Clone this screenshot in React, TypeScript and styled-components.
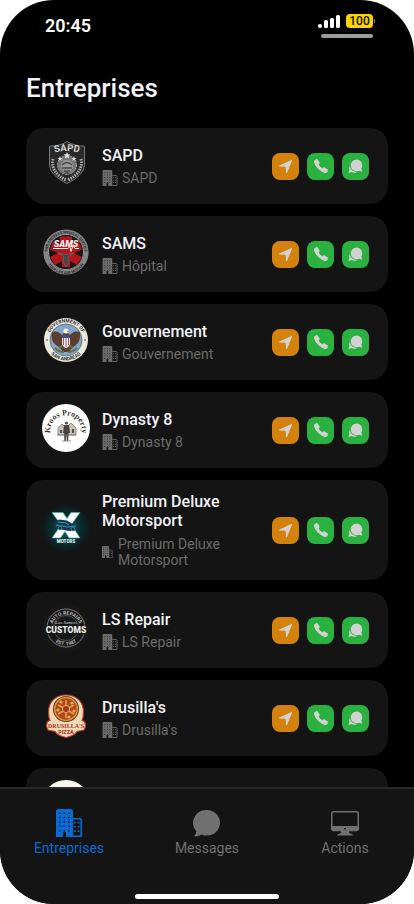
import React from "react";
import styled, { createGlobalStyle } from "styled-components";
import { IoCall } from "react-icons/io5";

const GlobalStyle = createGlobalStyle`
  * { box-sizing: border-box; }
  body { margin: 0; background: #fff; font-family: Roboto, "Liberation Sans", sans-serif; }
  button { font-family: inherit; border: 0; padding: 0; cursor: pointer; }
  h1, h2, p { margin: 0; font-weight: 500; }
`;

const Phone = styled.div`
  height: 100vh;
  display: flex;
  flex-direction: column;
  overflow: hidden;
  background: #000;
  border-radius: 54px;
`;

const StatusBar = styled.header`
  display: flex;
  justify-content: space-between;
  padding: 14px 38px 0 45px;
  height: 56px;
  flex-shrink: 0;
`;

const Clock = styled.time`
  color: #fff;
  font-size: 18px;
  line-height: 24px;
  font-weight: 600;
`;

const StatusSide = styled.div`
  display: flex;
  flex-direction: column;
  align-items: flex-end;
  gap: 6px;
`;

const StatusIcons = styled.div`
  display: flex;
  align-items: center;
  gap: 5px;
`;

const Battery = styled.span`
  position: relative;
  width: 27px;
  height: 14px;
  margin-right: 3px;
  border-radius: 4px;
  background: #fbd309;
  color: #111;
  font-size: 12px;
  line-height: 14px;
  font-weight: 500;
  text-align: center;

  &::after {
    content: "";
    position: absolute;
    right: -2px;
    top: 5px;
    width: 1px;
    height: 4px;
    background: #777;
  }
`;

const StatusLine = styled.div`
  width: 52px;
  height: 4px;
  margin-right: 3px;
  border-radius: 2px;
  background: #9b9b9b;
`;

const Main = styled.main`
  flex: 1;
  min-height: 0;
  display: flex;
  flex-direction: column;
  padding: 16px 26px 0;
`;

const PageTitle = styled.h1`
  color: #f2f2f7;
  font-size: 26px;
  line-height: 32px;
`;

const List = styled.ul`
  list-style: none;
  margin: 24px 0 0;
  padding: 0;
  flex: 1;
  min-height: 0;
  display: flex;
  flex-direction: column;
  gap: 12px;
  overflow-y: auto;
  scrollbar-width: none;
`;

const Card = styled.li`
  display: flex;
  flex-shrink: 0;
  align-items: center;
  gap: 12px;
  padding: 12px 19px 12px 16px;
  border-radius: 18px;
  background: #141414;
`;

const Avatar = styled.div`
  width: 48px;
  height: 52px;
  flex-shrink: 0;

  svg { display: block; }
`;

const Info = styled.div<{ $tight?: boolean }>`
  flex: 1;
  min-width: 0;
  display: flex;
  flex-direction: column;
  gap: ${(p) => (p.$tight ? 6 : 5)}px;
`;

const Name = styled.h2`
  max-width: 150px;
  color: #f2f2f7;
  font-size: 16px;
  line-height: 19px;
`;

const Category = styled.p<{ $tight?: boolean }>`
  display: flex;
  align-items: center;
  gap: ${(p) => (p.$tight ? 5 : 4)}px;
  max-width: 150px;
  color: #6b6b6b;
  font-size: 14px;
  line-height: 16px;
  font-weight: 400;

  svg { flex-shrink: 0; }
`;

const Actions = styled.div`
  display: flex;
  gap: 8px;
`;

const ActionButton = styled.button<{ $tone: "orange" | "green" }>`
  display: grid;
  place-items: center;
  width: 27px;
  height: 27px;
  border-radius: 8px;
  color: #d2d2d2;
  background: ${(p) => (p.$tone === "orange" ? "#d2820d" : "#2bb140")};
`;

const TabBar = styled.nav`
  display: grid;
  grid-template-columns: repeat(3, 1fr);
  flex-shrink: 0;
  padding-top: 20px;
  border-top: 2px solid #292929;
  background: #141414;
`;

const Tab = styled.button<{ $active?: boolean }>`
  display: flex;
  flex-direction: column;
  align-items: center;
  gap: 3px;
  background: none;
  color: ${(p) => (p.$active ? "#0a6ad4" : "#707070")};
  font-size: 14px;
  line-height: 16px;
`;

const HomeArea = styled.div`
  flex-shrink: 0;
  display: flex;
  justify-content: center;
  padding: 38px 0 5px;
  background: #141414;
`;

const HomeIndicator = styled.div`
  width: 144px;
  height: 5px;
  border-radius: 3px;
  background: #fff;
`;

const SignalIcon = () => (
  <svg width="23" height="14" viewBox="0 0 23 14" fill="#fff" aria-hidden="true">
    <rect x="0" y="10" width="4" height="4" rx="2" />
    <rect x="6" y="6" width="4" height="8" rx="1.5" />
    <rect x="12" y="4" width="4" height="10" rx="1.5" />
    <rect x="18" y="1" width="4" height="13" rx="1.5" />
  </svg>
);

const BuildingIcon = ({ width, height }: { width: number; height: number }) => (
  <svg width={width} height={height} viewBox="0 0 26 28" aria-hidden="true">
    <path
      fill="currentColor"
      fillRule="evenodd"
      d={
        "M2 0H15Q17 0 17 2V28H10V23H7V28H0V2Q0 0 2 0Z" +
        [4.3, 8.6, 13, 17.3, 21.7]
          .map((y) => [3.2, 7.6, 12].map((x) => `M${x} ${y - 0.7}h1.4v1.4h-1.4z`).join(""))
          .join("")
      }
    />
    <path d="M17 9.7H24Q25.2 9.7 25.2 11V27.2H17" fill="none" stroke="currentColor" strokeWidth="1.6" />
    <path
      fill="currentColor"
      d={[13.5, 17.7, 22].map((y) => [18, 21.6].map((x) => `M${x} ${y - 0.8}h1.7v1.7h-1.7z`).join("")).join("")}
    />
  </svg>
);

const ArrowIcon = () => (
  <svg width="15" height="15" viewBox="0 0 15 15" fill="currentColor" aria-hidden="true">
    <path d="M13.4 1Q14.5.6 14 1.7L9.2 13.4Q8.5 14.5 8 13.4L7.7 8.6Q7.6 7.9 6.9 7.8L1.6 7.6Q.4 7.2 1.5 6.4Z" />
  </svg>
);

const BubblesIcon = () => (
  <svg width="15" height="15" viewBox="0 0 15 15" fill="currentColor" aria-hidden="true">
    <path d="M8.3.4a5.9 5.9 0 0 1 5 9.1c.1.9.8 1.7.9 2.4.1.6-.4.8-1 .7l-2.2-.9A5.9 5.9 0 1 1 8.3.4Z" />
    <path d="M1.8 6.8A5 5 0 0 0 1.4 11c-.1 1-.7 1.5-.9 2.2 0 .6.4.8 1 .6l2-.7c2.1 1 4 .8 5.4-.2C5.2 12.7 2.2 10.6 1.8 6.8Z" />
  </svg>
);

const MessageIcon = () => (
  <svg width="28" height="28" viewBox="0 0 28 28" fill="currentColor" aria-hidden="true">
    <path d="M14 1a13 12.8 0 1 1-5.5 24.4c-1.7 1.2-4.1 1.9-6.6 1.8-.6-.1-.7-.6-.3-1 1.1-1 1.7-2.4 1.6-4.2A13 12.8 0 0 1 14 1Z" />
  </svg>
);

const MonitorIcon = () => (
  <svg width="28" height="28" viewBox="0 0 28 28" fill="currentColor" aria-hidden="true">
    <path
      fillRule="evenodd"
      d="M2.4 2H25.6Q28 2 28 4.4V20Q28 22.3 25.6 22.3H18V23.5Q18.2 24.6 20 24.8Q22 25 21.8 26.4H6.2Q6 25 8 24.8Q9.8 24.6 10 23.5V22.3H2.4Q0 22.3 0 20V4.4Q0 2 2.4 2ZM3 3.4Q1.5 3.4 1.5 4.8V17H26.5V4.8Q26.5 3.4 25 3.4ZM13 19V20.2H15V19Z"
    />
  </svg>
);

const Logo = ({ children }: { children: React.ReactNode }) => (
  <svg width="48" height="48" viewBox="0 0 48 48" aria-hidden="true" fontFamily="Roboto, sans-serif">
    {children}
  </svg>
);

const SapdLogo = () => (
  <Logo>
    <path
      d="M25 1.5C30 5 36 6 42.5 6.2V25C42 33 34 39 25 43.5C16 39 8 33 7.5 25V6.2C14 6 20 5 25 1.5Z"
      fill="#292929"
      stroke="#777"
      strokeWidth="1"
    />
    <path id="sapd-arc" d="M9 14Q25 8 41 14" fill="none" />
    <text fontSize="9.5" fontWeight="700" fill="#d6d6d6">
      <textPath href="#sapd-arc" startOffset="50%" textAnchor="middle">SAPD</textPath>
    </text>
    <path d="M11 19C9 28 14 35 24 40M39 19C41 28 36 35 26 40" fill="none" stroke="#aaa" strokeWidth="3" strokeDasharray="1.5 1" />
    <circle cx="25" cy="25" r="9.5" fill="#777" stroke="#aaa" strokeWidth="1" strokeDasharray="2 1" />
    <circle cx="25" cy="26" r="6" fill="#999" />
    <path d="M20 25q5-5 10 0M20 28h10M22 31h6M18 36l7-3 7 3" fill="none" stroke="#444" strokeWidth="1.3" />
    <path d="M25 12l1 2.3 2.4.2-1.8 1.6.6 2.4-2.2-1.3-2.2 1.3.6-2.4-1.8-1.6 2.4-.2ZM18 16l.7 2h2l-1.7 1 .6 2-1.6-1.2-1.6 1.2.6-2-1.7-1h2ZM32 16l.7 2h2l-1.7 1 .6 2-1.6-1.2-1.6 1.2.6-2-1.7-1h2Z" fill="#e2e2e2" />
  </Logo>
);

const SamsLogo = () => (
  <Logo>
    <circle cx="24" cy="24" r="20.3" fill="#171717" stroke="#858585" strokeWidth="4.6" />
    <circle cx="24" cy="24" r="17.6" fill="none" stroke="#b9b9b9" strokeWidth="0.8" />
    <path id="sams-top" d="M6 28.8A18.6 18.6 0 1 1 42 28.8" fill="none" />
    <path id="sams-bottom" d="M4.6 34A21.6 21.6 0 0 0 43.4 34" fill="none" />
    <g fontSize="3.7" fontWeight="700" fill="#252525">
      <text><textPath href="#sams-top" startOffset="50%" textAnchor="middle">SAN ANDREAS MEDICAL SERVICE</textPath></text>
      <text><textPath href="#sams-bottom" startOffset="50%" textAnchor="middle">YOUR LIFE OUR MISSION</textPath></text>
    </g>
    <path d="M18 8.5h12v7l7-2 3 8-8 3.5 8 4-5 8-7-4v6h-8v-6l-7 4-5-8 8-4-8-3.5 3-8 7 2Z" fill="#b0161c" />
    <path d="M16 25q8 3 16 0l-6 4 1 4-3 6-3-6 1-4Z" fill="#454545" stroke="#777" strokeWidth="0.6" />
    <text x="24" y="18.5" textAnchor="middle" fontSize="9" fontStyle="italic" fontWeight="900" fill="#f4f4f4">SAMS</text>
    <path d="M11 20.5h15l2-2 1 5 2-6 2 3h4" fill="none" stroke="#eee" strokeWidth="1" />
  </Logo>
);

const GovernmentLogo = () => (
  <Logo>
    <circle cx="24" cy="24" r="22" fill="#ece9dc" />
    <circle cx="24" cy="24" r="16" fill="#7fa6cf" stroke="#63675f" strokeWidth="0.8" />
    <path id="gov-top" d="M7 29A17.7 17.7 0 1 1 41 29" fill="none" />
    <path id="gov-bottom" d="M5.6 33A20.5 20.5 0 0 0 42.4 33" fill="none" />
    <g fontSize="4.9" fontWeight="700" fill="#353535">
      <text><textPath href="#gov-top" startOffset="50%" textAnchor="middle">GOVERNMENT OF</textPath></text>
      <text><textPath href="#gov-bottom" startOffset="50%" textAnchor="middle">SAN ANDREAS</textPath></text>
    </g>
    <circle cx="5" cy="24" r="0.8" fill="#333" />
    <circle cx="43" cy="24" r="0.8" fill="#333" />
    <path d="M10 16q6-2 10 3l2-2h4l2 2q4-5 10-3 1 9-4 13l-4 3-3 4h-6l-3-4-4-3q-6-4-4-13Z" fill="#5b3f2c" />
    <path d="M17 32l4-3M31 32l-4-3M13 32q4 4 9 4M35 32q-4 4-9 4" fill="none" stroke="#617247" strokeWidth="2" />
    <circle cx="24" cy="15" r="2.6" fill="#eee" />
    <path d="M25 14.5l3 1-3 1Z" fill="#d69b38" />
    <path d="M20 19h8v9q-1 3-4 4-3-1-4-4Z" fill="#eee" />
    <path d="M20 19h8v3h-8Z" fill="#3d5480" />
    <path d="M21.5 22v7M24 22v9M26.5 22v7" stroke="#b44f55" strokeWidth="1" />
  </Logo>
);

const KroosLogo = () => (
  <Logo>
    <circle cx="24" cy="24" r="24" fill="#fff" />
    <path id="kroos-arc" d="M8.2 29A15.9 15.9 0 1 1 39.8 29" fill="none" />
    <text fontSize="8" fontFamily="Liberation Serif, serif" fontWeight="700" fill="#3b3533">
      <textPath href="#kroos-arc" startOffset="50%" textAnchor="middle">Kroos Property</textPath>
    </text>
    <path d="M16 31v-7l4-4 4 4 5-5 5 5v7Z" fill="#c9c2b8" stroke="#7b736b" strokeWidth="0.8" />
    <path d="M18 26h2v3h-2ZM30 25h2v4h-2Z" fill="#544d49" />
    <circle cx="24.5" cy="19" r="1.6" fill="#5e5049" />
    <path d="M22 21h5l1 8h-1.4l-.4 8h-1.3l-.5-7-.6 7h-1.4l-.3-8H21Z" fill="#4a4440" />
    <path d="M15 31h19M20 37h9" stroke="#777" strokeWidth="0.7" />
  </Logo>
);

const MotorsLogo = () => (
  <Logo>
    <defs>
      <radialGradient id="teal-glow">
        <stop offset="0" stopColor="#176d6c" />
        <stop offset="0.55" stopColor="#0c3032" />
        <stop offset="1" stopColor="#0e1718" />
      </radialGradient>
    </defs>
    <circle cx="24" cy="24" r="24" fill="url(#teal-glow)" />
    <path d="M10 8.5h11l4 6 4-6h9L29.5 20.5 38 34H27l-4-6.5-4.5 6.5H10l9-13Z" fill="#fafefe" stroke="#39aaa5" strokeWidth="0.6" />
    <path d="M13 18l4-2.5 8 1 4 2.5 5 2 2 3-3 2.5-6 .5-10-2-4-2Z" fill="#183653" />
    <path d="M16 18l8 1 3 2M14 21l12 2 8-1" fill="none" stroke="#2c9caa" strokeWidth="1" />
    <circle cx="18" cy="24" r="1.8" fill="#102437" stroke="#2f7f95" />
    <circle cx="31" cy="25" r="1.8" fill="#102437" stroke="#2f7f95" />
    <text x="24" y="39" textAnchor="middle" fontSize="4.5" fontWeight="900" fill="#d9f5f3">MOTORS</text>
  </Logo>
);

const CustomsLogo = () => (
  <Logo>
    <circle cx="24" cy="24" r="24" fill="#171717" />
    <circle cx="24" cy="24" r="19" fill="none" stroke="#858585" strokeWidth="0.9" />
    <circle cx="24" cy="24" r="12.5" fill="none" stroke="#606060" strokeWidth="0.8" />
    <path id="customs-top" d="M9.6 25A14.4 14.4 0 1 1 38.4 25" fill="none" />
    <path id="customs-bottom" d="M7.6 30A17.5 17.5 0 0 0 40.4 30" fill="none" />
    <path d="M4 21.5h40v9H4Z" fill="#171717" />
    <g fontSize="5" fontWeight="700" fill="#b5b5b5">
      <text><textPath href="#customs-top" startOffset="50%" textAnchor="middle">AUTO REPAIRS</textPath></text>
      <text><textPath href="#customs-bottom" startOffset="50%" textAnchor="middle">EST. 1987</textPath></text>
    </g>
    <text x="24" y="20" textAnchor="middle" fontSize="5" fontStyle="italic" fontFamily="Liberation Serif, serif" fill="#ddd">Los Santos</text>
    <text x="24" y="29" textAnchor="middle" fontSize="8.5" fontWeight="900" fill="#ececec">CUSTOMS</text>
  </Logo>
);

const PizzaLogo = () => (
  <Logo>
    <path
      d="M24 3C35 3 41.5 10.5 41.5 20Q41.5 25 40 28.5L42.5 29.5Q44.5 34 42 38L35 39.5Q32 44 24 45.5Q16 44 13 39.5L6 38Q3.5 34 5.5 29.5L8 28.5Q6.5 25 6.5 20C6.5 10.5 13 3 24 3Z"
      fill="#ecdab6"
      stroke="#b93b2d"
      strokeWidth="1.2"
    />
    <circle cx="24" cy="17" r="13" fill="#5b2c1c" />
    <circle cx="24" cy="17" r="11.4" fill="#b5461d" stroke="#d89b39" strokeWidth="1.5" />
    <path d="M24 8v18M16 13l16 9M16 22l16-9" fill="none" stroke="#dda34d" strokeWidth="1.6" />
    <circle cx="24" cy="17" r="3.6" fill="#a13720" stroke="#e2b35f" />
    <g fill="#e0ad59">
      <circle cx="19" cy="10" r="1.6" />
      <circle cx="30" cy="11" r="1.6" />
      <circle cx="32" cy="19" r="1.6" />
      <circle cx="16" cy="18" r="1.6" />
      <circle cx="27" cy="25" r="1.6" />
    </g>
    <text x="24" y="35.5" textAnchor="middle" fontSize="6" fontFamily="Liberation Serif, serif" fontWeight="700" fill="#ad3228">DRUSILLA'S</text>
    <text x="24" y="41.5" textAnchor="middle" fontSize="5.5" fontWeight="900" fill="#b63a2c">PIZZA</text>
  </Logo>
);

const CreamLogo = () => (
  <Logo>
    <circle cx="24" cy="24" r="24" fill="#faf8ec" />
  </Logo>
);

interface Company {
  name?: string;
  category?: string;
  logo: React.ReactNode;
  tight?: boolean;
}

const companies: Company[] = [
  { name: "SAPD", category: "SAPD", logo: <SapdLogo /> },
  { name: "SAMS", category: "Hôpital", logo: <SamsLogo /> },
  { name: "Gouvernement", category: "Gouvernement", logo: <GovernmentLogo /> },
  { name: "Dynasty 8", category: "Dynasty 8", logo: <KroosLogo /> },
  { name: "Premium Deluxe Motorsport", category: "Premium Deluxe Motorsport", logo: <MotorsLogo />, tight: true },
  { name: "LS Repair", category: "LS Repair", logo: <CustomsLogo /> },
  { name: "Drusilla's", category: "Drusilla's", logo: <PizzaLogo /> },
  { logo: <CreamLogo /> },
];

const CompanyCard = ({ name, category, logo, tight }: Company) => (
  <Card>
    <Avatar>{logo}</Avatar>
    {name && (
      <>
        <Info $tight={tight}>
          <Name>{name}</Name>
          <Category $tight={tight}>
            <BuildingIcon width={tight ? 11 : 16} height={tight ? 12 : 16} />
            <span>{category}</span>
          </Category>
        </Info>
        <Actions>
          <ActionButton $tone="orange" aria-label="Localiser"><ArrowIcon /></ActionButton>
          <ActionButton $tone="green" aria-label="Appeler"><IoCall size={16} /></ActionButton>
          <ActionButton $tone="green" aria-label="Message"><BubblesIcon /></ActionButton>
        </Actions>
      </>
    )}
  </Card>
);

export default function App() {
  return (
    <>
      <GlobalStyle />
      <Phone>
        <StatusBar>
          <Clock>20:45</Clock>
          <StatusSide>
            <StatusIcons>
              <SignalIcon />
              <Battery>100</Battery>
            </StatusIcons>
            <StatusLine />
          </StatusSide>
        </StatusBar>
        <Main>
          <PageTitle>Entreprises</PageTitle>
          <List>
            {companies.map((company, index) => (
              <CompanyCard key={index} {...company} />
            ))}
          </List>
        </Main>
        <TabBar>
          <Tab $active aria-current="page">
            <BuildingIcon width={26} height={28} />
            Entreprises
          </Tab>
          <Tab>
            <MessageIcon />
            Messages
          </Tab>
          <Tab>
            <MonitorIcon />
            Actions
          </Tab>
        </TabBar>
        <HomeArea>
          <HomeIndicator />
        </HomeArea>
      </Phone>
    </>
  );
}
